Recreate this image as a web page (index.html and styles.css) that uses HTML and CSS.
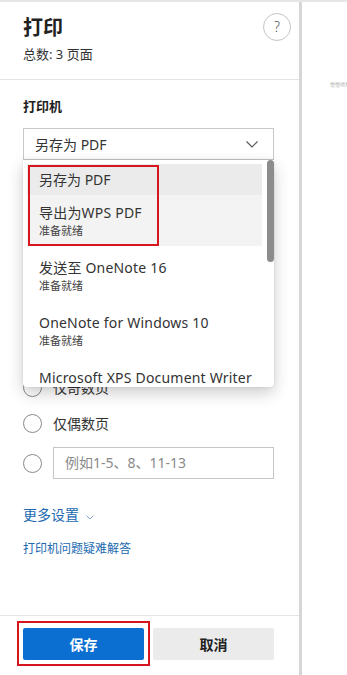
FILE: index.html
```html
<!DOCTYPE html>
<html lang="zh-CN">
<head>
<meta charset="utf-8">
<title>打印</title>
<link rel="stylesheet" href="styles.css">
</head>
<body>
<div class="topbar"></div>
<div class="app">
  <aside class="panel">
    <header class="head">
      <div class="titles">
        <h1 class="title">打印</h1>
        <p class="count">总数: 3 页面</p>
      </div>
      <button class="help" type="button">?</button>
    </header>

    <div class="body">
      <section class="field">
        <div class="lbl">打印机</div>
        <div class="select-wrap">
          <div class="select">
            <span>另存为 PDF</span>
            <svg class="chev" width="12" height="7" viewBox="0 0 12 7"><path d="M0.5 0.5 L6 6 L11.5 0.5" fill="none" stroke="#555" stroke-width="1.1"/></svg>
          </div>
          <div class="dropdown">
            <ul class="opts">
              <li class="opt opt-sel">另存为 PDF</li>
              <li class="opt opt-hover"><div class="opt-name">导出为WPS PDF</div><div class="opt-sub">准备就绪</div></li>
              <li class="opt"><div class="opt-name">发送至 OneNote 16</div><div class="opt-sub">准备就绪</div></li>
              <li class="opt"><div class="opt-name">OneNote for Windows 10</div><div class="opt-sub">准备就绪</div></li>
              <li class="opt"><div class="opt-name">Microsoft XPS Document Writer</div><div class="opt-sub">准备就绪</div></li>
            </ul>
            <div class="scrollbar"></div>
            <div class="mark mark-list"></div>
          </div>
        </div>
      </section>

      <section class="field copies">
        <div class="lbl">份数</div>
        <div class="num-input">1</div>
      </section>

      <section class="field pages">
        <div class="lbl">页面</div>
        <div class="radio-row"><span class="radio"></span><span>全部</span></div>
        <div class="radio-row"><span class="radio"></span><span>仅奇数页</span></div>
        <div class="radio-row"><span class="radio"></span><span>仅偶数页</span></div>
        <div class="radio-row custom"><span class="radio"></span><div class="range-input">例如1-5、8、11-13</div></div>
      </section>

      <a class="more">更多设置<svg width="8" height="5" viewBox="0 0 8 5"><path d="M0.5 0.5 L4 4 L7.5 0.5" fill="none" stroke="#7aa3cf" stroke-width="1"/></svg></a>
      <a class="trouble">打印机问题疑难解答</a>
    </div>

    <footer class="foot">
      <button class="btn save" type="button">保存<span class="mark mark-save"></span></button>
      <button class="btn cancel" type="button">取消</button>
    </footer>
  </aside>
  <main class="preview"><span class="thumb-text">慢慢地预览</span></main>
</div>
</body>
</html>
```

FILE: styles.css
```css
html, body {
  margin: 0;
  padding: 0;
}
body {
  width: 347px;
  height: 675px;
  overflow: hidden;
  background: #fff;
  color: #333;
  font-family: "Noto Sans", "Noto Sans CJK SC", sans-serif;
}
.topbar {
  height: 2px;
  background: #e6e6e6;
}
.app {
  display: flex;
  height: 673px;
}
.panel {
  width: 299px;
  flex: none;
  display: flex;
  flex-direction: column;
  border-right: 3px solid #d6d6d6;
}
.head {
  display: flex;
  justify-content: space-between;
  align-items: flex-start;
  padding: 12px 8px 16px 23px;
  border-bottom: 1px solid #e4e4e4;
}
.title {
  margin: 0;
  font-size: 20px;
  line-height: 28px;
  font-weight: 700;
  color: #222;
}
.count {
  margin: 3px 0 0;
  font-size: 13px;
  line-height: 18px;
  color: #333;
}
.help {
  width: 28px;
  height: 28px;
  margin-top: -1px;
  padding: 0;
  border: 1px solid #c4c4c4;
  border-radius: 50%;
  background: #fff;
  color: #555;
  font-family: "Noto Sans", sans-serif;
  font-size: 14px;
  font-weight: 300;
  line-height: 26px;
}
.body {
  flex: 1;
  padding: 16px 25px 0 23px;
  display: flex;
  flex-direction: column;
  align-items: stretch;
}
.lbl {
  font-size: 13px;
  font-weight: 600;
  line-height: 20px;
  color: #222;
  margin-bottom: 12px;
}
.select-wrap {
  position: relative;
}
.select {
  height: 32px;
  box-sizing: border-box;
  border: 1px solid #c8c8c8;
  display: flex;
  align-items: center;
  justify-content: space-between;
  padding: 0 15px 0 11px;
  font-size: 14px;
  color: #333;
}
.dropdown {
  position: absolute;
  left: 0;
  right: 0;
  top: 100%;
  height: 227px;
  box-sizing: border-box;
  padding: 4px 12px 0 4px;
  background: #fff;
  border-radius: 0 0 4px 4px;
  box-shadow: 0 6px 16px rgba(0, 0, 0, 0.2), 0 0 3px rgba(0, 0, 0, 0.1);
  overflow: hidden;
  z-index: 5;
}
.opts {
  list-style: none;
  margin: 0;
  padding: 0;
}
.opt {
  padding: 8px 12px 7px;
  margin-bottom: 4px;
  color: #333;
}
.opt-sel {
  height: 31px;
  box-sizing: border-box;
  padding: 0 12px;
  margin-bottom: 0;
  line-height: 31px;
  font-size: 14px;
  background: #ebebeb;
}
.opt-hover {
  background: #f3f3f3;
}
.opt-name {
  font-size: 14px;
  line-height: 20px;
  letter-spacing: 0.2px;
  white-space: nowrap;
}
.opt-sub {
  font-size: 11px;
  line-height: 16px;
  color: #444;
}
.scrollbar {
  position: absolute;
  right: 0;
  top: 0;
  width: 7px;
  height: 102px;
  border-radius: 4px;
  background: #8c8c8c;
}
.mark {
  position: absolute;
  box-sizing: border-box;
  border: 2px solid #d5161c;
  pointer-events: none;
}
.mark-list {
  left: 5px;
  top: 5px;
  width: 131px;
  height: 81px;
}
.copies {
  margin-top: 24px;
}
.num-input {
  height: 32px;
  box-sizing: border-box;
  border: 1px solid #c6c6c6;
  padding-left: 11px;
  font-size: 14px;
  line-height: 30px;
}
.pages {
  margin-top: 61px;
}
.pages .lbl {
  margin-bottom: 4px;
}
.radio-row {
  display: flex;
  align-items: center;
  gap: 11px;
  height: 36px;
  font-size: 14px;
  color: #333;
}
.radio {
  width: 19px;
  height: 19px;
  flex: none;
  box-sizing: border-box;
  border: 1px solid #8a8a8a;
  border-radius: 50%;
}
.radio-row.custom {
  height: 32px;
  margin-top: 6px;
}
.range-input {
  flex: 1;
  height: 32px;
  box-sizing: border-box;
  border: 1px solid #c6c6c6;
  padding-left: 11px;
  line-height: 30px;
  color: #8a8a8a;
  font-size: 14px;
}
.more {
  margin-top: 26px;
  display: flex;
  align-items: center;
  gap: 7px;
  font-size: 14px;
  line-height: 20px;
  color: #2169b0;
}
.more svg {
  margin-top: 4px;
}
.trouble {
  margin-top: 15px;
  font-size: 12px;
  line-height: 18px;
  color: #2169b0;
}
.foot {
  display: grid;
  grid-template-columns: 1fr 1fr;
  gap: 9px;
  padding: 12px 25px 15px 23px;
  border-top: 1px solid #e5e5e5;
}
.btn {
  position: relative;
  height: 32px;
  border: none;
  border-radius: 2px;
  font-family: "Noto Sans CJK SC", sans-serif;
  font-size: 14px;
  font-weight: 700;
  padding: 0;
}
.save {
  background: #0b6fd1;
  color: #fff;
}
.cancel {
  background: #ebebeb;
  color: #222;
}
.mark-save {
  left: -6px;
  right: -6px;
  top: -7px;
  bottom: -6px;
}
.preview {
  flex: 1;
  overflow: hidden;
  padding: 78px 0 0 28px;
}
.thumb-text {
  display: block;
  white-space: nowrap;
  font-size: 5px;
  color: #b5b5b5;
}
```
